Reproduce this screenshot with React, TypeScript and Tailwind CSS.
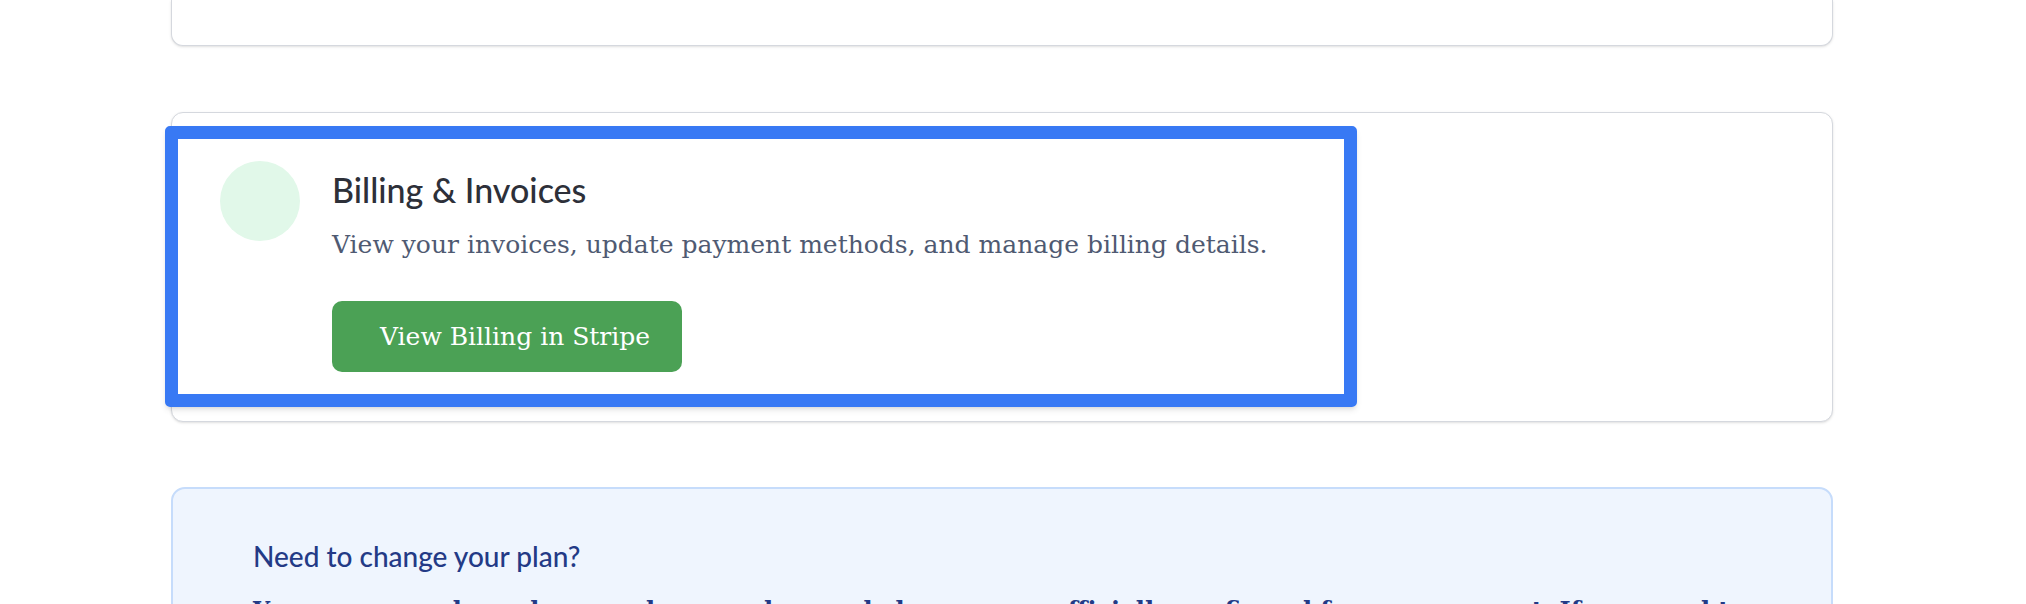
import React from 'react';

const sans = "font-['Lato','Inter',sans-serif]";
const serif = "font-['DejaVu_Serif','Liberation_Serif',serif]";

const BillingCard: React.FC = () => {
  return (
    <div className="relative mt-[66px] h-[310px] w-[1662px] rounded-xl border border-[#d5d8de] bg-white p-12 shadow-sm">
      <div className="flex gap-8">
        <div className="h-20 w-20 shrink-0 rounded-full bg-[#e1f8e9]" />
        <div className="flex flex-col items-start">
          <h2 className={`${sans} mt-[9px] text-[34px] font-medium leading-[40px] text-[#2d3039]`}>
            Billing &amp; Invoices
          </h2>
          <p className={`${serif} mt-[17px] text-[25px] leading-[36px] text-[#4f5a72]`}>
            View your invoices, update payment methods, and manage billing details.
          </p>
          <button
            className={`${serif} mt-[38px] inline-flex h-[71px] items-center rounded-[10px] bg-[#4ba155] pl-12 pr-8 text-[25px] text-white`}
          >
            View Billing in Stripe
          </button>
        </div>
      </div>

      {/* highlight overlay */}
      <div className="pointer-events-none absolute left-[-7px] top-[13px] h-[281px] w-[1192px] rounded-[5px] border-[13px] border-[#3879f4] shadow-md" />
    </div>
  );
};

export default function App() {
  return (
    <div className="min-h-screen overflow-hidden bg-white pl-[171px]">
      {/* tail of the card above */}
      <div className="h-[46px] w-[1662px] rounded-b-xl border border-t-0 border-[#d5d8de] bg-white shadow-sm" />

      <BillingCard />

      <div className="mt-[65px] w-[1662px] rounded-[14px] border-2 border-[#c6dcfb] bg-[#eff5fe] px-[80px] pb-12 pt-[49px]">
        <h3 className={`${sans} text-[28px] font-medium leading-[36px] text-[#233a86]`}>Need to change your plan?</h3>
        <p className={`${serif} mt-[17px] text-[24px] font-bold leading-[39px] text-[#233a86]`}>
          You can upgrade or downgrade your plan, and changes are officially confirmed for your account. If you need to make a change, please contact us about it.
        </p>
      </div>
    </div>
  );
}
